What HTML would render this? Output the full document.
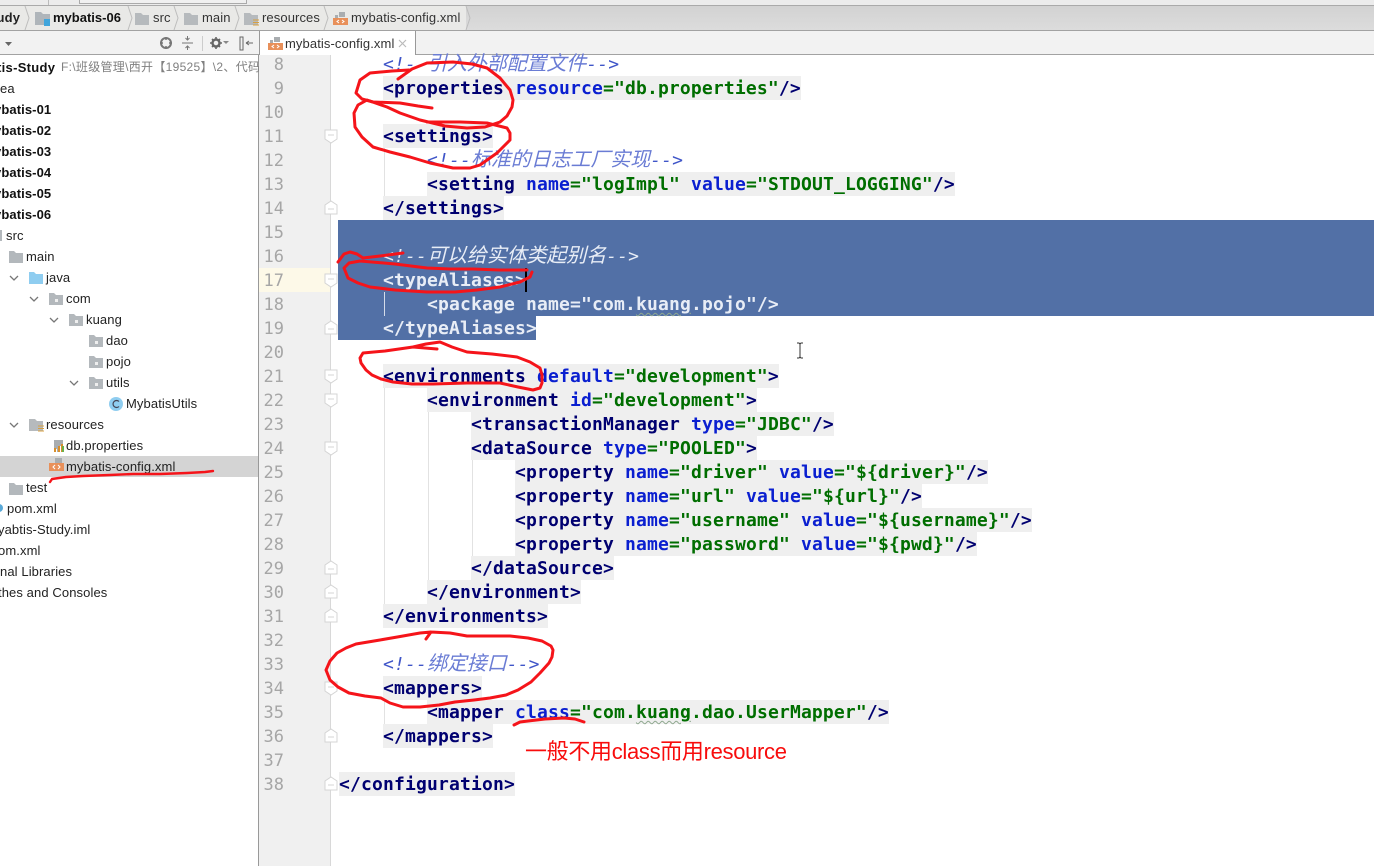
<!DOCTYPE html>
<html><head><meta charset="utf-8"><style>
html,body{margin:0;padding:0;background:#fff}
#r{position:relative;width:1374px;height:866px;overflow:hidden;background:#fff;font-family:"Liberation Sans","Noto Sans CJK SC",sans-serif}
#r div,#r svg{position:absolute}
.n{left:258px;width:26px;text-align:right;font:17px/24px "DejaVu Sans Mono",monospace;color:#a6a6a6;height:24px;margin-top:1px}
.l{font:bold 18px/24px "DejaVu Sans Mono","Noto Sans CJK SC",monospace;letter-spacing:.16px;white-space:pre;height:24px;color:#000070;margin-top:1px}
.g{background:#efefef;display:inline-block;height:24px;margin-top:-1px;padding-top:1px;height:23px}
.a{color:#0a1fd0}.s{color:#006e00}
.c{color:#3f55c8;font-weight:normal;font-style:italic}
.z{font-size:20px;letter-spacing:-.1px;color:#6a7cd4;line-height:20px}
.w{text-decoration:underline wavy #8fa88f 1px;text-underline-offset:2px}
.x,.x *{color:#e8edf6!important}
.f{left:0;font-size:13px;line-height:21px;height:21px;color:#222;white-space:nowrap;letter-spacing:.1px}
.b{font-weight:bold;color:#111}
.d{font-size:13px;line-height:24px;color:#333;white-space:nowrap;letter-spacing:.1px}
.i{width:1px;background:#e2e2e2}
</style></head><body><div id="r">

<!-- top bars -->
<div style="left:0;top:0;width:1374px;height:5px;background:#ececec;border-bottom:1px solid #aaa"></div>
<div style="left:48px;top:0;width:1px;height:5px;background:#bbb"></div>
<div style="left:79px;top:0;width:166px;height:3px;background:#f0f0f0;border:1px solid #aaa;border-top:0"></div>
<div style="left:0;top:6px;width:1374px;height:24px;background:linear-gradient(#d2d2d2,#dcdcdc);border-bottom:1px solid #a2a2a2"></div>
<div style="left:0;top:6px;width:466px;height:24px;background:#e9e9e7"></div>
<div style="left:0;top:31px;width:1374px;height:23px;background:#f2f2f2;border-bottom:1px solid #a2a2a2"></div>

<div class="d" style="left:-8px;top:6px;font-weight:bold;color:#222;letter-spacing:.2px">tudy</div>
<div class="d" style="left:53px;top:6px;font-weight:bold;color:#111;letter-spacing:0">mybatis-06</div>
<div class="d" style="left:153px;top:6px">src</div>
<div class="d" style="left:202px;top:6px">main</div>
<div class="d" style="left:262px;top:6px">resources</div>
<div class="d" style="left:351px;top:6px">mybatis-config.xml</div>

<svg style="left:0;top:6px" width="480" height="25" fill="none">
<path d="M25 0l4 12-4 12M128 0l4 12-4 12M174 0l4 12-4 12M235 0l4 12-4 12M324 0l4 12-4 12M466 0l4 12-4 12" stroke="#bdbdbd"/>
<path d="M35 6h6l2 2h7v11H35z" fill="#afb5ba"/><rect x="44" y="13" width="6" height="7" fill="#40a5dc"/>
<path d="M135 7h6l2 2h6v10h-14z" fill="#b6babd"/>
<path d="M184 7h6l2 2h6v10h-14z" fill="#b6babd"/>
<path d="M244 7h6l2 2h6v10h-14z" fill="#b6babd"/><path d="M253 14h6M253 16.500h6M253 19h6" stroke="#d8a040" stroke-width="1"/>
<path d="M339 6h6v5h-6zM335 9h3v3h-3z" fill="#a9adb0"/><rect x="333" y="12" width="15" height="7" fill="#e8905a"/>
<path d="M339 14l-2 1.500 2 1.500M342 14l2 1.500-2 1.500" stroke="#fff"/>
</svg>

<!-- toolbar icons -->
<svg style="left:0;top:31px" width="258" height="24" fill="none">
<path d="M5 11h7l-3.500 4z" fill="#666"/>
<circle cx="166" cy="12" r="5" stroke="#777" stroke-width="2"/><path d="M166 6v3M166 15v3M160 12h3M169 12h3" stroke="#777" stroke-width="1.500"/>
<path d="M182 12h11M187.500 5v4M185.500 7l2 2 2-2M187.500 19v-4M185.500 17l2-2 2 2" stroke="#777"/>
<path d="M202.500 5v15" stroke="#ccc"/>
<circle cx="216" cy="12" r="3.500" stroke="#666" stroke-width="2.400"/><path d="M216 6v2M216 16v2M210 12h2M220 12h2M212 8l1 1M219 15l1 1M220 8l-1 1M213 15l-1 1" stroke="#666" stroke-width="1.600"/>
<path d="M223 10h6l-3 3z" fill="#888"/>
<rect x="240" y="6" width="3" height="13" stroke="#666"/><path d="M246 12h7M246 12l3-2M246 12l3 2" stroke="#666"/>
</svg>
<div style="left:259px;top:31px;width:155px;height:24px;background:#fff;border-left:1px solid #999;border-right:1px solid #999"></div>
<div class="d" style="left:285px;top:32px">mybatis-config.xml</div>
<svg style="left:259px;top:31px" width="156" height="24" fill="none">
<path d="M15 6h6v5h-6zM11 9h3v3h-3z" fill="#a9adb0"/><rect x="9" y="12" width="15" height="7" fill="#e8905a"/>
<path d="M15 14l-2 1.500 2 1.500M18 14l2 1.500-2 1.500" stroke="#fff"/>
<path d="M140 9l7 7M147 9l-7 7" stroke="#bbb" stroke-width="1.200"/>
</svg>

<!-- sidebar -->
<div style="left:258px;top:55px;width:1px;height:811px;background:#999"></div>
<div style="left:0;top:456px;width:258px;height:21px;background:#d4d4d4"></div>
<div class="f b" style="left:-3px;top:57px;letter-spacing:.3px">tis-Study</div>
<div class="f" style="left:61px;top:57px;color:#808080;font-size:12px;letter-spacing:.3px">F:\班级管理\西开【19525】\2、代码</div>
<div class="f" style="left:0;top:78px">ea</div>
<div class="f b" style="left:-6px;top:99px">ybatis-01</div>
<div class="f b" style="left:-6px;top:120px">ybatis-02</div>
<div class="f b" style="left:-6px;top:141px">ybatis-03</div>
<div class="f b" style="left:-6px;top:162px">ybatis-04</div>
<div class="f b" style="left:-6px;top:183px">ybatis-05</div>
<div class="f b" style="left:-6px;top:204px">ybatis-06</div>
<div class="f" style="left:6px;top:225px">src</div>
<div class="f" style="left:26px;top:246px">main</div>
<div class="f" style="left:46px;top:267px">java</div>
<div class="f" style="left:66px;top:288px">com</div>
<div class="f" style="left:86px;top:309px">kuang</div>
<div class="f" style="left:106px;top:330px">dao</div>
<div class="f" style="left:106px;top:351px">pojo</div>
<div class="f" style="left:106px;top:372px">utils</div>
<div class="f" style="left:126px;top:393px">MybatisUtils</div>
<div class="f" style="left:46px;top:414px">resources</div>
<div class="f" style="left:66px;top:435px">db.properties</div>
<div class="f" style="left:66px;top:456px">mybatis-config.xml</div>
<div class="f" style="left:26px;top:477px">test</div>
<div class="f" style="left:7px;top:498px">pom.xml</div>
<div class="f" style="left:-2px;top:519px">yabtis-Study.iml</div>
<div class="f" style="left:-2px;top:540px">om.xml</div>
<div class="f" style="left:0;top:561px">nal Libraries</div>
<div class="f" style="left:-2px;top:582px">thes and Consoles</div>

<svg style="left:0;top:225px" width="258" height="300" fill="none">
<rect x="-6" y="5" width="8" height="11" fill="#b3b8bc"/>
<path d="M9 26h5l2 2h7v10H9z" fill="#b3b8bc"/>
<path d="M29 47h5l2 2h7v10H29z" fill="#8fcdf0"/>
<path d="M49 68h5l2 2h7v10H49zM69 89h5l2 2h7v10H69zM89 110h5l2 2h7v10H89zM89 131h5l2 2h7v10H89zM89 152h5l2 2h7v10H89z" fill="#b3b8bc"/>
<path d="M55 74h3v3h-3zM75 95h3v3h-3zM95 116h3v3h-3zM95 137h3v3h-3zM95 158h3v3h-3z" fill="#eee"/>
<path d="M10 51l4 4 4-4M30 72l4 4 4-4M50 93l4 4 4-4M70 156l4 4 4-4M10 198l4 4 4-4" stroke="#777" stroke-width="1.300"/>
<circle cx="116" cy="179" r="7" fill="#8fcdf0"/><path d="M119 176.500a3.500 3.500 0 1 0 0 5" stroke="#445" stroke-width="1.200"/>
<path d="M29 194h6l2 2h6v10H29z" fill="#b6babd"/><path d="M38 201h6M38 203.500h6M38 206h6" stroke="#d8a040"/>
<path d="M54 215h9v6h-3v6h-3v-3h-3z" fill="#a9adb0"/><path d="M55 227v-4M59 227v-6M62 227v-8" stroke="#d98f2b" stroke-width="2"/><path d="M63 227v-6" stroke="#6ab04c" stroke-width="2"/>
<path d="M55 233h7v5h-7z" fill="#a9adb0"/><rect x="49" y="238" width="15" height="8" fill="#e8905a"/>
<path d="M55 240l-2 2 2 2M58 240l2 2-2 2" stroke="#fff"/>
<path d="M9 258h5l2 2h7v10H9z" fill="#b3b8bc"/>
<circle cx="-1" cy="283" r="4" fill="#5aa9d8"/>
</svg>

<!-- editor gutter -->
<div style="left:259px;top:55px;width:71px;height:811px;background:#f0f0f0;border-right:1px solid #d8d8d8"></div>
<div style="left:259px;top:268px;width:71px;height:24px;background:#fdf9e8"></div>
<div class="n" style="top:52px">8</div><div class="n" style="top:76px">9</div><div class="n" style="top:100px">10</div><div class="n" style="top:124px">11</div><div class="n" style="top:148px">12</div><div class="n" style="top:172px">13</div><div class="n" style="top:196px">14</div><div class="n" style="top:220px">15</div><div class="n" style="top:244px">16</div><div class="n" style="top:268px">17</div><div class="n" style="top:292px">18</div><div class="n" style="top:316px">19</div><div class="n" style="top:340px">20</div><div class="n" style="top:364px">21</div><div class="n" style="top:388px">22</div><div class="n" style="top:412px">23</div><div class="n" style="top:436px">24</div><div class="n" style="top:460px">25</div><div class="n" style="top:484px">26</div><div class="n" style="top:508px">27</div><div class="n" style="top:532px">28</div><div class="n" style="top:556px">29</div><div class="n" style="top:580px">30</div><div class="n" style="top:604px">31</div><div class="n" style="top:628px">32</div><div class="n" style="top:652px">33</div><div class="n" style="top:676px">34</div><div class="n" style="top:700px">35</div><div class="n" style="top:724px">36</div><div class="n" style="top:748px">37</div><div class="n" style="top:772px">38</div>

<!-- selection -->
<div style="left:338px;top:220px;width:1036px;height:96px;background:#5270a6"></div>
<div style="left:338px;top:316px;width:198px;height:24px;background:#5270a6"></div>

<!-- indent guides -->
<div class="i" style="left:384px;top:148px;height:48px"></div>
<div class="i" style="left:384px;top:292px;height:24px;background:#d5dcea"></div>
<div class="i" style="left:384px;top:388px;height:216px"></div>
<div class="i" style="left:428px;top:412px;height:168px"></div>
<div class="i" style="left:472px;top:460px;height:96px"></div>
<div class="i" style="left:384px;top:700px;height:24px"></div>

<!-- fold markers -->
<svg style="left:322px;top:0" width="18" height="866" fill="#fff" stroke="#d4d4d4">
<defs><path id="fd" d="M3 -6h12v9l-6 4-6-4zM6 -1h6"/><path id="fu" d="M3 6h12v-9l-6-4-6 4zM6 1h6"/></defs>
<use href="#fd" y="136"/><use href="#fu" y="208"/><use href="#fd" y="280"/><use href="#fu" y="328"/><use href="#fd" y="376"/><use href="#fd" y="400"/><use href="#fd" y="448"/><use href="#fu" y="568"/><use href="#fu" y="592"/><use href="#fu" y="616"/><use href="#fd" y="688"/><use href="#fu" y="736"/><use href="#fu" y="784"/>
</svg>

<!-- code -->
<div class="l" style="left:383px;top:52px"><span class="c">&lt;!--<span class="z">引入外部配置文件</span>--&gt;</span></div>
<div class="l" style="left:383px;top:76px"><span class="g">&lt;properties <span class="a">resource</span><span class="s">="db.properties"</span>/&gt;</span></div>
<div class="l" style="left:383px;top:124px"><span class="g">&lt;settings&gt;</span></div>
<div class="l" style="left:427px;top:148px"><span class="c">&lt;!--<span class="z">标准的日志工厂实现</span>--&gt;</span></div>
<div class="l" style="left:427px;top:172px"><span class="g">&lt;setting <span class="a">name</span><span class="s">="logImpl"</span> <span class="a">value</span><span class="s">="STDOUT_LOGGING"</span>/&gt;</span></div>
<div class="l" style="left:383px;top:196px"><span class="g">&lt;/settings&gt;</span></div>
<div class="l x" style="left:383px;top:244px"><span class="c">&lt;!--<span class="z">可以给实体类起别名</span>--&gt;</span></div>
<div class="l x" style="left:383px;top:268px">&lt;typeAliases&gt;</div>
<div style="left:525px;top:268px;width:2px;height:24px;background:#000"></div>
<div class="l x" style="left:427px;top:292px">&lt;package name="com.<span class="w">kuang</span>.pojo"/&gt;</div>
<div class="l x" style="left:383px;top:316px">&lt;/typeAliases&gt;</div>
<div class="l" style="left:383px;top:364px"><span class="g">&lt;environments <span class="a">default</span><span class="s">="development"</span>&gt;</span></div>
<div class="l" style="left:427px;top:388px"><span class="g">&lt;environment <span class="a">id</span><span class="s">="development"</span>&gt;</span></div>
<div class="l" style="left:471px;top:412px"><span class="g">&lt;transactionManager <span class="a">type</span><span class="s">="JDBC"</span>/&gt;</span></div>
<div class="l" style="left:471px;top:436px"><span class="g">&lt;dataSource <span class="a">type</span><span class="s">="POOLED"</span>&gt;</span></div>
<div class="l" style="left:515px;top:460px"><span class="g">&lt;property <span class="a">name</span><span class="s">="driver"</span> <span class="a">value</span><span class="s">="${driver}"</span>/&gt;</span></div>
<div class="l" style="left:515px;top:484px"><span class="g">&lt;property <span class="a">name</span><span class="s">="url"</span> <span class="a">value</span><span class="s">="${url}"</span>/&gt;</span></div>
<div class="l" style="left:515px;top:508px"><span class="g">&lt;property <span class="a">name</span><span class="s">="username"</span> <span class="a">value</span><span class="s">="${username}"</span>/&gt;</span></div>
<div class="l" style="left:515px;top:532px"><span class="g">&lt;property <span class="a">name</span><span class="s">="password"</span> <span class="a">value</span><span class="s">="${pwd}"</span>/&gt;</span></div>
<div class="l" style="left:471px;top:556px"><span class="g">&lt;/dataSource&gt;</span></div>
<div class="l" style="left:427px;top:580px"><span class="g">&lt;/environment&gt;</span></div>
<div class="l" style="left:383px;top:604px"><span class="g">&lt;/environments&gt;</span></div>
<div class="l" style="left:383px;top:652px"><span class="c">&lt;!--<span class="z">绑定接口</span>--&gt;</span></div>
<div class="l" style="left:383px;top:676px"><span class="g">&lt;mappers&gt;</span></div>
<div class="l" style="left:427px;top:700px"><span class="g">&lt;mapper <span class="a">class</span><span class="s">="com.<span class="w">kuang</span>.dao.UserMapper"</span>/&gt;</span></div>
<div class="l" style="left:383px;top:724px"><span class="g">&lt;/mappers&gt;</span></div>
<div class="l" style="left:339px;top:772px"><span class="g">&lt;/configuration&gt;</span></div>

<!-- I-beam -->
<svg style="left:795px;top:342px" width="10" height="18" fill="none"><path d="M2 1h2l1 1 1-1h2M5 2v13M2 16h2l1-1 1 1h2" stroke="#333"/></svg>

<!-- red note -->
<div style="left:525px;top:738px;font-size:22px;line-height:28px;color:#f80c0c;white-space:nowrap;letter-spacing:-.32px">一般不用class而用resource</div>

<!-- red strokes -->
<svg style="left:0;top:0" width="1374" height="866" fill="none" stroke="#f5141a" stroke-width="3" stroke-linecap="round" stroke-linejoin="round">
<polyline points="409,70 392,71 370,73 360,80 356,93 362,99 373,102 400,103 418,106 432,108"/>
<polyline points="398,79 412,69 427,63 453,62 472,64 487,68 500,78 510,90 513,100 512,107 507,116 500,122 485,127 467,128 445,126 420,120 400,113 387,107 367,100 358,105 354,113 355,127 362,137 373,147 390,152 410,157 430,163 453,168 470,168 480,165 497,153 510,140 510,133 507,128 487,123 460,122 427,122"/>
<polyline points="338,262 344,254 350,252 357,254 363,258 380,256 403,253"/>
<polyline points="527,270 500,270 473,269 450,269 427,268 395,264 360,261 349,263 344,268 348,278 358,283 370,287 395,290 427,292 455,292 477,290 500,287 520,282 530,277 532,272"/>
<polyline points="437,349 413,347 385,351 363,353 360,358 361,363 366,370 372,375 381,379 393,382 412,384 433,384 467,383 500,383 518,387 533,390 540,388 542,383 542,375 540,368 530,362 517,357 492,354 467,352 452,347 440,342 426,344 413,347"/>
<polyline points="426,639 431,632 450,633 467,636 510,636 528,638 542,641 551,646 553,650 552,657 549,663 540,673 531,682 518,690 506,695 490,698 474,700 455,702 439,705 420,707 403,707 390,703 381,698 365,696 349,693 338,687 330,680 326,670 330,661 337,653 346,648 356,644 380,640 403,636 420,633 431,632"/>
<polyline points="514,725 520,722 528,721 545,719 564,718 575,719 584,722"/>
<polyline points="50,482 52,479 66,477 83,476 110,475 133,474 160,474 187,473 205,472 213,471" stroke-width="2.400"/>
</svg>
</div></body></html>
